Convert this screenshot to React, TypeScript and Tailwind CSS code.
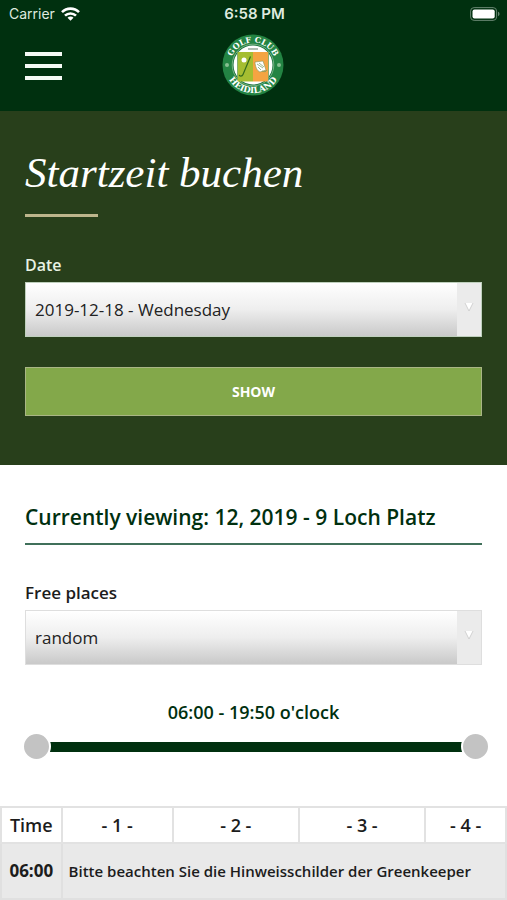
import { useState } from "react";

const thumb =
  "pointer-events-none absolute inset-0 m-0 h-full w-full appearance-none bg-transparent [&::-webkit-slider-thumb]:pointer-events-auto [&::-webkit-slider-thumb]:size-[29px] [&::-webkit-slider-thumb]:appearance-none [&::-webkit-slider-thumb]:rounded-full [&::-webkit-slider-thumb]:border-2 [&::-webkit-slider-thumb]:border-solid [&::-webkit-slider-thumb]:border-white [&::-webkit-slider-thumb]:bg-[#c3c3c3]";

function StatusBar() {
  return (
    <div className="grid h-7 grid-cols-3 items-center pr-[7px] pl-[9px] font-[Inter,sans-serif] text-sm text-[#dfeadf]">
      <div className="flex items-center gap-1.5">
        <span>Carrier</span>
        <svg className="h-3.5 w-[19px]" viewBox="0 0 19 14" fill="none" stroke="#fff" strokeWidth="2.6" aria-hidden="true">
          <path d="M1 5.2a12 12 0 0 1 17 0" />
          <path d="M4 8.7a7.8 7.8 0 0 1 11 0" />
          <path d="M9.500 13.800L6.500 10.800a4.200 4.200 0 0 1 6 0Z" fill="#fff" stroke="none" />
        </svg>
      </div>
      <span className="text-center text-[15px] font-semibold">6:58 PM</span>
      <svg className="ml-auto h-3.5 w-[30px]" viewBox="0 0 30 14" aria-label="Battery full">
        <rect x=".6" y=".6" width="26" height="12.800" rx="3.500" fill="none" stroke="#668570" />
        <rect x="2.500" y="2.500" width="22.200" height="9" rx="2" fill="#fff" />
        <path d="M28 4.800c2 .6 2 3.800 0 4.400Z" fill="#668570" />
      </svg>
    </div>
  );
}

function Logo() {
  return (
    <svg className="size-[62px]" viewBox="0 0 62 62" role="img" aria-label="Golf Club Heidiland">
      <defs>
        <path id="ring-top" d="M8.500 33v-2a22.500 22.500 0 0 1 45 0v2" />
        <path id="ring-bottom" d="M2.800 31a28.200 28.200 0 0 0 56.400 0" />
      </defs>
      <circle cx="31" cy="31" r="30.500" fill="#238443" />
      <circle cx="31" cy="31" r="20.800" fill="#16713a" stroke="#9bc9a2" strokeWidth=".7" />
      <circle cx="31" cy="31" r="19.500" fill="#fff" />
      <path d="M15.500 18h15.500v29.500H15.500Z" fill="#a5bd31" />
      <path d="M31 18h15.500v29.500H31Z" fill="#f5a442" />
      <path d="M15.500 18v29.500M46.500 18v29.500" stroke="#72a563" strokeWidth=".8" />
      <path d="M26 15h10" stroke="#93a99a" strokeWidth="1.500" />
      <circle cx="22" cy="26" r="2.500" fill="#fff" />
      <path d="M28.500 22.500 21 40.500c-.8 2-3.500 2-3.800.3" fill="none" stroke="#356b1c" strokeWidth="1.200" />
      <path d="m33 28 8-1 3 9-6 2c-3-1-5-6-5-10Z" fill="#fff" stroke="#87975b" strokeWidth=".6" />
      <path d="m35 30 6 4m-4-5 5 4m-6 0 3 3m1 1c2 1 4 1 5-1" fill="none" stroke="#6c9a63" strokeWidth=".7" />
      <circle cx="5" cy="31" r="2" fill="#87bf91" />
      <circle cx="57" cy="31" r="2" fill="#87bf91" />
      <g fill="#fff" fontFamily="DejaVu Serif, serif" fontWeight="700" fontSize="8" textAnchor="middle">
        <text><textPath href="#ring-top" startOffset="50%">GOLF CLUB</textPath></text>
        <text fontSize="8.500"><textPath href="#ring-bottom" startOffset="50%">HEIDILAND</textPath></text>
      </g>
    </svg>
  );
}

function SelectField({ id, label, options, labelSize, borderColor }: { id: string; label: string; options: string[]; labelSize: string; borderColor: string }) {
  return (
    <div>
      <label htmlFor={id} className={`block pb-[5px] leading-6 font-semibold ${labelSize}`}>{label}</label>
      <div className="relative">
        <select
          id={id}
          className={`block h-[55px] w-full appearance-none rounded-none border bg-linear-to-b from-white via-[#eeeeee] to-[#c9c9c9] pr-8 pl-[9px] text-[17px] text-[#222] ${borderColor}`}
        >
          {options.map((o) => <option key={o}>{o}</option>)}
        </select>
        <span className="pointer-events-none absolute inset-y-px right-px flex w-6 justify-center bg-[#ebebeb] pt-[19px]">
          <svg className="h-2.5 w-2.5" viewBox="0 0 10 10" aria-hidden="true">
            <path d="M1 1h8L5 9Z" fill="#fff" />
            <path d="m1 1 4 8 4-8" fill="none" stroke="#c8c8c8" strokeWidth=".8" />
          </svg>
        </span>
      </div>
    </div>
  );
}

const clock = (m: number) => `${String(Math.floor(m / 60)).padStart(2, "0")}:${String(m % 60).padStart(2, "0")}`;

function TimeRange() {
  const min = 360;
  const max = 1190;
  const [from, setFrom] = useState(min);
  const [to, setTo] = useState(max);
  const pct = (v: number) => ((v - min) / (max - min)) * 100;
  return (
    <div className="mt-[35px]">
      <p className="text-center text-lg leading-6 font-semibold text-[#00300f]">{clock(from)} - {clock(to)} o'clock</p>
      <div className="-mr-2 -ml-[3px] pt-2">
        <div className="relative flex h-[29px] items-center px-3.5">
          <div className="h-2.5 w-full">
            <div className="h-full bg-[#00300f]" style={{ marginLeft: `${pct(from)}%`, width: `${pct(to) - pct(from)}%` }} />
          </div>
          <input type="range" aria-label="Earliest time" min={min} max={max} step={10} value={from} onChange={(e) => setFrom(Math.min(+e.target.value, to))} className={thumb} />
          <input type="range" aria-label="Latest time" min={min} max={max} step={10} value={to} onChange={(e) => setTo(Math.max(+e.target.value, from))} className={thumb} />
        </div>
      </div>
    </div>
  );
}

export default function App() {
  return (
    <div className="bg-white font-['Open_Sans',sans-serif] text-[#1c1c1c]">
      <header className="bg-[#00300f] pb-[15px]">
        <StatusBar />
        <div className="grid grid-cols-3 items-center px-[25px] pt-[6px]">
          <button type="button" aria-label="Open menu" className="flex w-[37px] flex-col gap-2 pt-0.5">
            <span className="h-1 w-full bg-[#f5faf5]" />
            <span className="h-1 w-full bg-[#f5faf5]" />
            <span className="h-1 w-full bg-[#f5faf5]" />
          </button>
          <a href="#home" className="justify-self-center"><Logo /></a>
        </div>
      </header>

      <section className="bg-[#283f1b] px-[25px] pt-[35px] pb-[49px] text-[#e9f3e4]">
        <h1 className="font-['Liberation_Serif',serif] text-[43px] leading-[54px] text-white italic">Startzeit buchen</h1>
        <div className="mt-3.5 h-[3px] w-[73px] bg-[#bdb58c]" />
        <form className="pt-9" onSubmit={(e) => e.preventDefault()}>
          <SelectField id="date" label="Date" labelSize="text-base" options={["2019-12-18 - Wednesday"]} borderColor="border-[#bfd0bd]" />
          <button type="submit" className="mt-[30px] block h-[49px] w-full border border-[#a9b585] bg-[#83a84a] text-sm font-bold text-white">SHOW</button>
        </form>
      </section>

      <main>
        <div className="px-[25px] pt-[37px]">
          <h2 className="border-b-2 border-[#40705a] pb-[11px] text-[21px] leading-[30px] font-semibold text-[#00300f]">Currently viewing: 12, 2019 - 9 Loch Platz</h2>
          <div className="pt-9">
            <SelectField id="places" label="Free places" labelSize="text-[17px]" options={["random", "1", "2", "3", "4"]} borderColor="border-[#dedede]" />
          </div>
          <TimeRange />
        </div>

        <table className="mt-[45px] w-full table-fixed border-collapse">
          <colgroup>
            <col className="w-[12%]" />
            <col className="w-[22%]" />
            <col className="w-[25%]" />
            <col className="w-[25%]" />
            <col className="w-[16%]" />
          </colgroup>
          <thead>
            <tr className="h-9 text-lg leading-6">
              {["Time", "- 1 -", "- 2 -", "- 3 -", "- 4 -"].map((h) => (
                <th key={h} scope="col" className="border-2 border-[#e2e2e2] p-0 font-semibold">{h}</th>
              ))}
            </tr>
          </thead>
          <tbody>
            <tr className="h-14 bg-[#e9e9e9]">
              <th scope="row" className="border-2 border-[#e0e0e0] p-0 text-[17px] font-bold">06:00</th>
              <td colSpan={4} className="border-2 border-[#e0e0e0] px-1.5 py-0 text-[15px] font-semibold">Bitte beachten Sie die Hinweisschilder der Greenkeeper</td>
            </tr>
          </tbody>
        </table>
      </main>
    </div>
  );
}
